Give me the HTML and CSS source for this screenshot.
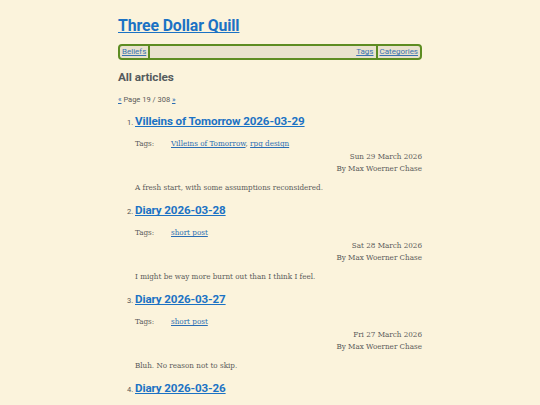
FILE: index.html
```html
<!DOCTYPE html>
<html lang="en">
<head>
<meta charset="utf-8">
<title>All articles — Three Dollar Quill</title>
<link rel="stylesheet" href="styles.css">
</head>
<body>
<div class="page">
  <header class="site-header">
    <h1 class="site-title"><a href="#">Three Dollar Quill</a></h1>
    <nav class="site-nav">
      <a class="nav-item" href="#">Beliefs</a>
      <span class="nav-spacer"></span>
      <a class="nav-item" href="#">Tags</a>
      <a class="nav-item" href="#">Categories</a>
    </nav>
  </header>
  <main>
    <h2 class="page-heading">All articles</h2>
    <p class="pager"><a href="#">«</a> Page 19 / 308 <a href="#">»</a></p>
    <ol class="articles" start="1">
      <li class="article">
        <h3 class="article-title"><a href="#">Villeins of Tomorrow 2026-03-29</a></h3>
        <div class="tags"><span class="tags-label">Tags:</span><span class="tags-list"><a href="#">Villeins of Tomorrow</a>, <a href="#">rpg design</a></span></div>
        <p class="meta">Sun 29 March 2026<br>By Max Woerner Chase</p>
        <p class="summary">A fresh start, with some assumptions reconsidered.</p>
      </li>
      <li class="article">
        <h3 class="article-title"><a href="#">Diary 2026-03-28</a></h3>
        <div class="tags"><span class="tags-label">Tags:</span><span class="tags-list"><a href="#">short post</a></span></div>
        <p class="meta">Sat 28 March 2026<br>By Max Woerner Chase</p>
        <p class="summary">I might be way more burnt out than I think I feel.</p>
      </li>
      <li class="article">
        <h3 class="article-title"><a href="#">Diary 2026-03-27</a></h3>
        <div class="tags"><span class="tags-label">Tags:</span><span class="tags-list"><a href="#">short post</a></span></div>
        <p class="meta">Fri 27 March 2026<br>By Max Woerner Chase</p>
        <p class="summary">Bluh. No reason not to skip.</p>
      </li>
      <li class="article">
        <h3 class="article-title"><a href="#">Diary 2026-03-26</a></h3>
        <div class="tags"><span class="tags-label">Tags:</span><span class="tags-list"><a href="#">short post</a></span></div>
        <p class="meta">Thu 26 March 2026<br>By Max Woerner Chase</p>
        <p class="summary">Taking it easy.</p>
      </li>
    </ol>
  </main>
</div>
</body>
</html>
```
FILE: styles.css
```css
html, body {
  margin: 0;
  padding: 0;
  background: #fbf3dc;
}

body {
  color: #5a5a5a;
  font-family: "DejaVu Serif Condensed", "DejaVu Serif", serif;
  font-size: 8px;
  line-height: 12px;
}

a {
  color: #2a6db3;
  text-decoration-skip-ink: none;
}

.page {
  width: 304px;
  margin: 0 auto;
  padding-top: 14px;
}

/* headings and navigation share a sans face */
.site-title,
.site-nav,
.page-heading,
.pager,
.article-title,
.article::marker {
  font-family: Roboto, "Open Sans", sans-serif;
}

.site-title {
  margin: 0;
  font-size: 15.8px;
  letter-spacing: -0.1px;
  line-height: 24px;
  font-weight: 700;
}

.site-title a {
  color: #1b72c4;
}

.site-nav {
  display: flex;
  margin-top: 6px;
  height: 12px;
  border: 2px solid #5d8c22;
  border-radius: 4px;
  background: #e9e2cd;
  font-size: 8px;
  line-height: 12px;
}

.nav-item {
  padding: 0 2px;
  color: #3a72b0;
}

.nav-item + .nav-item,
.nav-spacer {
  border-left: 2px solid #5d8c22;
}

.nav-spacer {
  flex: 1;
}

.page-heading {
  margin: 8px 0 0;
  font-size: 11.8px;
  letter-spacing: -0.1px;
  line-height: 18px;
  font-weight: 700;
  color: #555b5e;
}

.pager {
  margin: 8px 0 0;
  font-size: 7.5px;
  line-height: 12px;
}

.articles {
  margin: 5px 0 0;
  padding-left: 17px;
}

.article {
  margin-bottom: 6px;
}

.article::marker {
  font-size: 7.5px;
  color: #555;
}

.article-title {
  margin: 0;
  font-size: 11.6px;
  letter-spacing: -0.1px;
  line-height: 20px;
  font-weight: 700;
}

.article-title a {
  color: #1b72c4;
}

.tags {
  display: flex;
  margin-top: 7px;
}

.tags-label {
  width: 36px;
}

.meta {
  margin: 1px 0 0;
  text-align: right;
}

.summary {
  margin: 7px 0 0;
}
```
